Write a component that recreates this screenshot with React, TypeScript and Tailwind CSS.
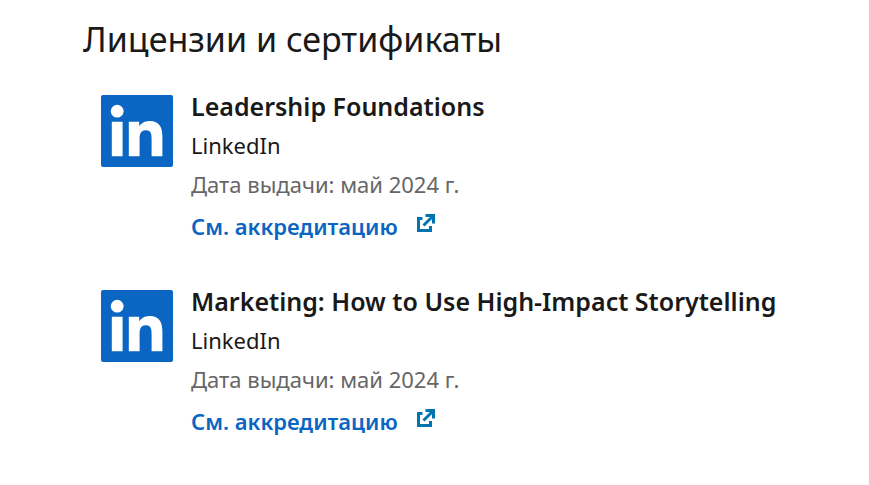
type Certificate = {
  title: string;
  issuer: string;
  issued: string;
};

const CERTIFICATES: Certificate[] = [
  { title: 'Leadership Foundations', issuer: 'LinkedIn', issued: 'май 2024 г.' },
  { title: 'Marketing: How to Use High-Impact Storytelling', issuer: 'LinkedIn', issued: 'май 2024 г.' },
];

function LinkedInLogo() {
  return (
    <svg viewBox="0 0 72 72" className="mt-2 h-18 w-18 shrink-0" aria-hidden="true">
      <rect width="72" height="72" rx="2" fill="#0a66c2" />
      <circle cx="16.2" cy="16.2" r="6.4" fill="#fff" />
      <path
        fill="#fff"
        d="M10.8 26.8h10.8v34.4H10.8zM27.8 26.8h10.4v4.7c1.4-2.7 5-5.6 10.2-5.6 10.8 0 13 7.1 13 16.4v18.9H50.6V44.4c0-4 0-9.2-5.7-9.2s-6.3 4.4-6.3 9v17H27.8z"
      />
    </svg>
  );
}

function ExternalIcon() {
  return (
    <svg viewBox="0 0 18 18" className="mt-[7px] h-[18px] w-[18px]" fill="none" stroke="#0073b1" strokeWidth="3" aria-hidden="true">
      <path d="M5.5 4.5h-4v12h12V12M8.5 1.5h8v8M16 2l-9.5 9.5" />
    </svg>
  );
}

function CertificateItem({ item }: { item: Certificate }) {
  return (
    <li className="flex gap-[18px]">
      <LinkedInLogo />
      <div className="min-w-0">
        <h3 className="text-[25px] leading-[39px] font-semibold text-[#191919]">{item.title}</h3>
        <p className="text-[22px] leading-[39px] text-[#191919]">{item.issuer}</p>
        <p className="text-[22px] leading-[39px] text-[#666666]">Дата выдачи: {item.issued}</p>
        <a
          href="#"
          className="mt-[3px] flex w-fit items-start gap-[19px] text-[22px] leading-[39px] font-semibold text-[#0a66c2]"
        >
          См. аккредитацию
          <ExternalIcon />
        </a>
      </div>
    </li>
  );
}

export default function App() {
  return (
    <main className="min-h-screen bg-white pt-[15px] pr-6 pb-4 pl-[83px] font-['Noto_Sans',sans-serif]">
      <h2 className="text-[34px] leading-12 text-[#191919]">Лицензии и сертификаты</h2>
      <ul className="mt-6 space-y-9 pl-[18px]">
        {CERTIFICATES.map((item) => (
          <CertificateItem key={item.title} item={item} />
        ))}
      </ul>
    </main>
  );
}
